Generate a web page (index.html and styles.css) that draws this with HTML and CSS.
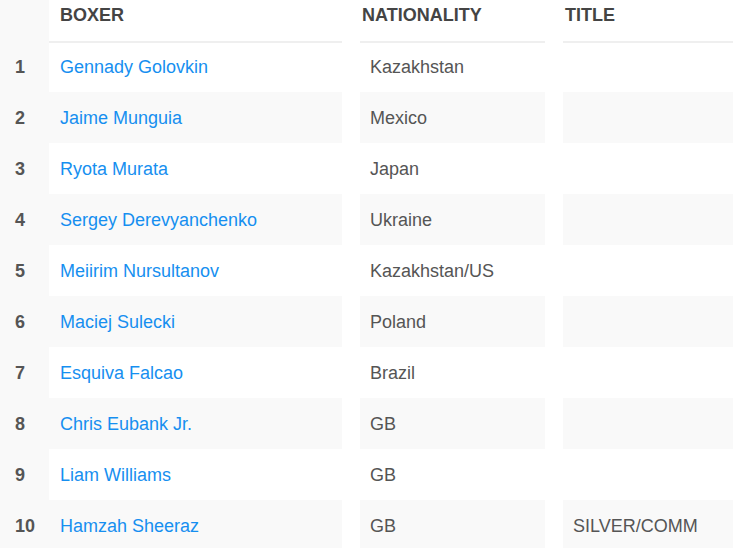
FILE: index.html
```html
<!DOCTYPE html>
<html>
<head>
<meta charset="utf-8">
<link rel="stylesheet" href="styles.css">
</head>
<body>
<div class="table">
  <div class="row head">
    <div class="rank"></div>
    <div class="cell boxer">BOXER</div>
    <div class="cell nat">NATIONALITY</div>
    <div class="cell title">TITLE</div>
  </div>
  <div class="row">
    <div class="rank">1</div>
    <div class="cell boxer"><a href="#">Gennady Golovkin</a></div>
    <div class="cell nat">Kazakhstan</div>
    <div class="cell title"></div>
  </div>
  <div class="row alt">
    <div class="rank">2</div>
    <div class="cell boxer"><a href="#">Jaime Munguia</a></div>
    <div class="cell nat">Mexico</div>
    <div class="cell title"></div>
  </div>
  <div class="row">
    <div class="rank">3</div>
    <div class="cell boxer"><a href="#">Ryota Murata</a></div>
    <div class="cell nat">Japan</div>
    <div class="cell title"></div>
  </div>
  <div class="row alt">
    <div class="rank">4</div>
    <div class="cell boxer"><a href="#">Sergey Derevyanchenko</a></div>
    <div class="cell nat">Ukraine</div>
    <div class="cell title"></div>
  </div>
  <div class="row">
    <div class="rank">5</div>
    <div class="cell boxer"><a href="#">Meiirim Nursultanov</a></div>
    <div class="cell nat">Kazakhstan/US</div>
    <div class="cell title"></div>
  </div>
  <div class="row alt">
    <div class="rank">6</div>
    <div class="cell boxer"><a href="#">Maciej Sulecki</a></div>
    <div class="cell nat">Poland</div>
    <div class="cell title"></div>
  </div>
  <div class="row">
    <div class="rank">7</div>
    <div class="cell boxer"><a href="#">Esquiva Falcao</a></div>
    <div class="cell nat">Brazil</div>
    <div class="cell title"></div>
  </div>
  <div class="row alt">
    <div class="rank">8</div>
    <div class="cell boxer"><a href="#">Chris Eubank Jr.</a></div>
    <div class="cell nat">GB</div>
    <div class="cell title"></div>
  </div>
  <div class="row">
    <div class="rank">9</div>
    <div class="cell boxer"><a href="#">Liam Williams</a></div>
    <div class="cell nat">GB</div>
    <div class="cell title"></div>
  </div>
  <div class="row alt">
    <div class="rank">10</div>
    <div class="cell boxer"><a href="#">Hamzah Sheeraz</a></div>
    <div class="cell nat">GB</div>
    <div class="cell title">SILVER/COMM</div>
  </div>
</div>
</body>
</html>
```
FILE: styles.css
```css
html, body {
  margin: 0;
  padding: 0;
  background: #ffffff;
}
body {
  font-family: "Liberation Sans", Arial, sans-serif;
  font-size: 18px;
  color: #555555;
}
.table {
  display: flex;
  flex-direction: column;
  width: 733px;
}
.row {
  display: flex;
  height: 51px;
  align-items: stretch;
}
.rank {
  width: 49px;
  flex: none;
  background: #f9f9f9;
  font-weight: bold;
  color: #555555;
  padding-left: 15px;
  padding-top: 2px;
  box-sizing: border-box;
  display: flex;
  align-items: center;
}
.cell {
  display: flex;
  align-items: center;
  box-sizing: border-box;
  padding-left: 10px;
  padding-top: 2px;
}
.boxer {
  width: 293px;
  flex: none;
  padding-left: 11px;
}
.nat {
  width: 185px;
  flex: none;
  margin-left: 18px;
}
.title {
  flex: 1;
  margin-left: 18px;
}
.alt .cell {
  background: #f9f9f9;
}
.head {
  height: 41px;
}
.head .rank {
  padding-top: 0;
}
.head .cell {
  align-items: flex-start;
  padding-top: 5px;
  line-height: 21px;
  font-weight: bold;
  color: #444444;
  box-shadow: 0 2px 0 #efefef;
  padding-left: 2px;
}
.head .boxer {
  padding-left: 11px;
}
a {
  color: #168ff0;
  text-decoration: none;
}
```
